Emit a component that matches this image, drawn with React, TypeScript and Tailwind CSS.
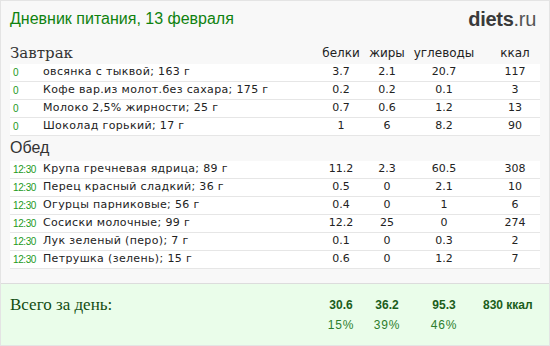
const breakfast = [
  { t: "0", name: "овсянка с тыквой; 163 г", p: "3.7", f: "2.1", c: "20.7", k: "117" },
  { t: "0", name: "Кофе вар.из молот.без сахара; 175 г", p: "0.2", f: "0.2", c: "0.1", k: "3" },
  { t: "0", name: "Молоко 2,5% жирности; 25 г", p: "0.7", f: "0.6", c: "1.2", k: "13" },
  { t: "0", name: "Шоколад горький; 17 г", p: "1", f: "6", c: "8.2", k: "90" },
]

const lunch = [
  { t: "12:30", name: "Крупа гречневая ядрица; 89 г", p: "11.2", f: "2.3", c: "60.5", k: "308" },
  { t: "12:30", name: "Перец красный сладкий; 36 г", p: "0.5", f: "0", c: "2.1", k: "10" },
  { t: "12:30", name: "Огурцы парниковые; 56 г", p: "0.4", f: "0", c: "1", k: "6" },
  { t: "12:30", name: "Сосиски молочные; 99 г", p: "12.2", f: "25", c: "0", k: "274" },
  { t: "12:30", name: "Лук зеленый (перо); 7 г", p: "0.1", f: "0", c: "0.3", k: "2" },
  { t: "12:30", name: "Петрушка (зелень); 15 г", p: "0.6", f: "0", c: "1.2", k: "7" },
]

type Row = (typeof breakfast)[number]

const cols = "grid grid-cols-[33px_1fr_50px_42px_72px_60px]"

function FoodRow({ r }: { r: Row }) {
  return (
    <div className={`${cols} h-[18px] items-center border-b border-[#e6e6e6] bg-white text-[11px] text-[#222] font-['DejaVu_Sans',sans-serif]`}>
      <span className="pl-[3px] font-['Liberation_Sans',sans-serif] text-[10px] tracking-[-0.4px] text-[#1c9a1c]">{r.t}</span>
      <span className="tracking-[0.35px] whitespace-nowrap">{r.name}</span>
      <span className="text-center">{r.p}</span>
      <span className="text-center">{r.f}</span>
      <span className="text-center">{r.c}</span>
      <span className="pl-[10px] text-center">{r.k}</span>
    </div>
  )
}

function App() {
  return (
    <div className="flex h-[346px] w-[550px] flex-col overflow-hidden border border-[#e4e4e4] bg-[#f8f8f8] font-['Liberation_Sans',sans-serif]">
      <div className="flex h-[36px] items-start justify-between px-[9px] pt-[6px]">
        <h1 className="text-[16px] text-[#0f820f]">Дневник питания, 13 февраля</h1>
        <div className="pr-[4px] text-[20px] leading-[24px] tracking-[-0.3px] text-[#3a3a3a]">
          <span className="font-bold">diets</span>
          <span className="text-[#555]">.ru</span>
        </div>
      </div>

      <div className="px-[9px]">
        <div className={`${cols} h-[27px] items-end pb-[2px] text-[12px] text-[#222] font-['DejaVu_Sans',sans-serif]`}>
          <span className="col-span-2 font-['DejaVu_Serif',serif] text-[15px] leading-[18px] text-[#333]">Завтрак</span>
          <span className="text-center">белки</span>
          <span className="text-center">жиры</span>
          <span className="text-center">углеводы</span>
          <span className="pl-[10px] text-center">ккал</span>
        </div>
        {breakfast.map((r, i) => (
          <FoodRow key={i} r={r} />
        ))}
        <div className="flex h-[25px] items-end pb-[1px] text-[16px] text-[#333]">Обед</div>
        {lunch.map((r, i) => (
          <FoodRow key={i} r={r} />
        ))}
      </div>

      <div className="mt-[14px] flex-1 border-t border-[#dcdcdc] bg-[#eafdea] px-[9px] pt-[11px]">
        <div className={`${cols} items-center text-[12px] leading-[20px] text-[#1b5e1b]`}>
          <span className="col-span-2 font-['Liberation_Serif',serif] text-[17px] text-[#124d12]">Всего за день:</span>
          <span className="text-center font-bold">30.6</span>
          <span className="text-center font-bold">36.2</span>
          <span className="text-center font-bold">95.3</span>
          <span className="whitespace-nowrap pl-[3px] font-bold">830 ккал</span>
        </div>
        <div className={`${cols} text-[12px] leading-[20px] tracking-[0.8px] text-[#2d7d2d]`}>
          <span className="col-span-2" />
          <span className="text-center">15%</span>
          <span className="text-center">39%</span>
          <span className="text-center">46%</span>
          <span />
        </div>
      </div>
    </div>
  )
}

export default App
